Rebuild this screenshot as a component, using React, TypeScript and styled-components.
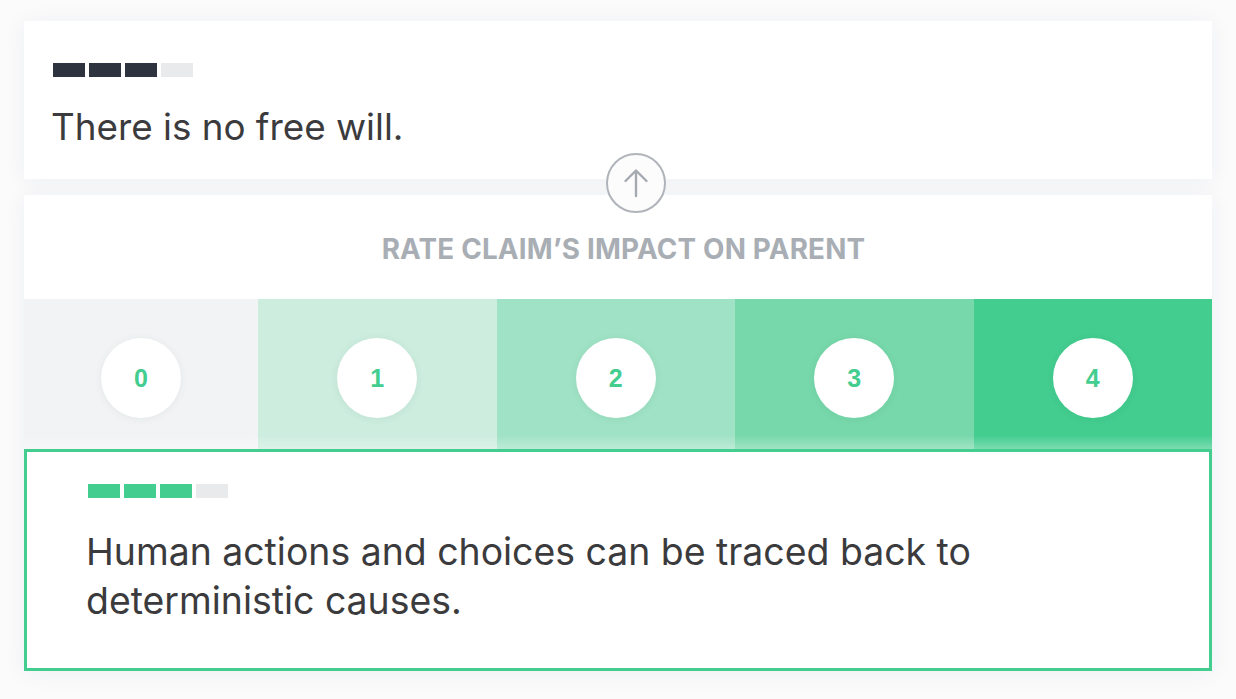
import React from "react";
import styled, { createGlobalStyle } from "styled-components";

const Global = createGlobalStyle`
  html, body { margin: 0; padding: 0; background: #fbfbfc; }
  body { font-family: Inter, "Noto Sans", sans-serif; -webkit-font-smoothing: antialiased; }
`;

const Page = styled.div`
  width: 1236px;
  height: 699px;
  box-sizing: border-box;
  padding: 21px 24px 28px;
  display: flex;
  flex-direction: column;
  gap: 16px;
  background: #fbfbfc;
`;

const Card = styled.section`
  background: #ffffff;
  box-shadow: 0 2px 22px rgba(40, 50, 70, 0.06);
  position: relative;
`;

const ParentCard = styled(Card)`
  height: 158px;
  box-sizing: border-box;
  padding: 42px 29px 0;
  display: flex;
  flex-direction: column;
  gap: 26px;
`;

const Bars = styled.div`
  display: flex;
  gap: 4px;
`;

const Bar = styled.div<{ $on: boolean; $color: string }>`
  width: 32px;
  height: 14px;
  background: ${(p) => (p.$on ? p.$color : "#e9eaeb")};
`;

const ClaimText = styled.p<{ $size: number; $lh: number }>`
  margin: 0 0 0 -2px;
  font-size: ${(p) => p.$size}px;
  line-height: ${(p) => p.$lh}px;
  color: #3b3b3d;
  font-weight: 400;
`;

const RateCard = styled(Card)`
  display: flex;
  flex-direction: column;
`;

const Header = styled.div`
  height: 104px;
  display: flex;
  align-items: center;
  justify-content: center;
  padding: 4px 0 0 11px;
  box-sizing: border-box;
  font-weight: 700;
  font-size: 27.8px;
  letter-spacing: 0.2px;
  color: #a9aeb5;
  text-transform: uppercase;
`;

const UpBadge = styled.div`
  position: absolute;
  left: calc(50% + 18px);
  top: -42px;
  transform: translateX(-50%);
  width: 60px;
  height: 60px;
  box-sizing: border-box;
  border-radius: 50%;
  border: 2px solid #b0b4ba;
  background: #fcfcfd;
  display: flex;
  align-items: center;
  justify-content: center;
`;

const Scale = styled.div`
  display: grid;
  grid-template-columns: 234px repeat(4, 1fr);
  height: 150px;
`;

const Cell = styled.div<{ $bg: string }>`
  background: ${(p) => p.$bg};
  display: flex;
  align-items: center;
  justify-content: center;
  padding-top: 8px;
  box-sizing: border-box;
  position: relative;
  &::after {
    content: "";
    position: absolute;
    left: 0;
    right: 0;
    bottom: 0;
    height: 14px;
    background: linear-gradient(to bottom, rgba(255,255,255,0), rgba(255,255,255,0.3));
  }
`;

const Knob = styled.div`
  width: 80px;
  height: 80px;
  border-radius: 50%;
  background: #ffffff;
  box-shadow: 0 1px 8px rgba(30, 80, 60, 0.07);
  display: flex;
  align-items: center;
  justify-content: center;
  color: #43cd8f;
  font-family: "Liberation Sans", Arial, sans-serif;
  font-weight: 700;
  font-size: 25px;
`;

const ChildCard = styled.div`
  border: 3px solid #43cd8f;
  background: #ffffff;
  height: 222px;
  box-sizing: border-box;
  padding: 32px 61px 0;
  display: flex;
  flex-direction: column;
  gap: 29px;
`;

const scaleColors = ["#f2f3f5", "#cdeddf", "#a0e2c5", "#77d8ab", "#43cd8f"];

const ArrowIcon = () => (
  <svg width="26" height="30" viewBox="0 0 26 30" fill="none">
    <path d="M13 28 V3 M2.5 13 L13 2.5 L23.5 13" stroke="#a5aab0" strokeWidth="2.4" strokeLinecap="round" strokeLinejoin="round" />
  </svg>
);

const Strength = ({ value, color }: { value: number; color: string }) => (
  <Bars>
    {[0, 1, 2, 3].map((i) => (
      <Bar key={i} $on={i < value} $color={color} />
    ))}
  </Bars>
);

export default function App() {
  return (
    <>
      <Global />
      <Page>
        <ParentCard>
          <Strength value={3} color="#2d3440" />
          <ClaimText $size={36.8} $lh={48}>There is no free will.</ClaimText>
        </ParentCard>
        <RateCard>
          <UpBadge>
            <ArrowIcon />
          </UpBadge>
          <Header>Rate claim’s impact on parent</Header>
          <Scale>
            {scaleColors.map((c, i) => (
              <Cell key={i} $bg={c}>
                <Knob>{i}</Knob>
              </Cell>
            ))}
          </Scale>
          <ChildCard>
            <Strength value={3} color="#43cd8f" />
            <ClaimText $size={37.4} $lh={49}>
              Human actions and choices can be traced back to
              <br />
              deterministic causes.
            </ClaimText>
          </ChildCard>
        </RateCard>
      </Page>
    </>
  );
}
